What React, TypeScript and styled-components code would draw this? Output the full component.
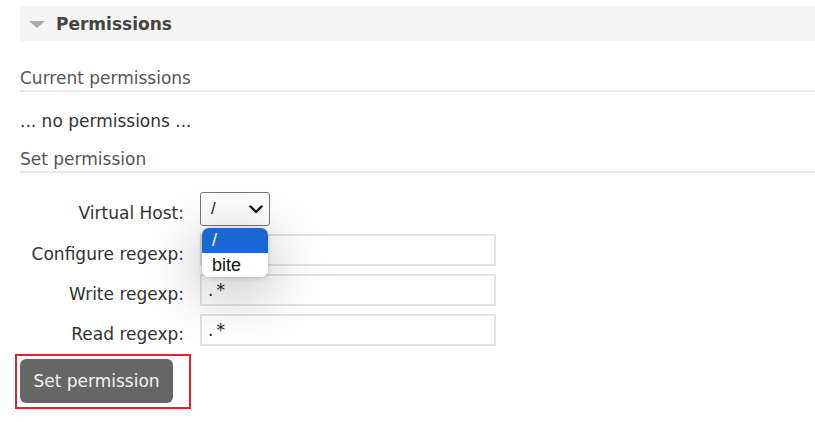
import React from "react";
import styled, { createGlobalStyle } from "styled-components";

const GlobalStyle = createGlobalStyle`
  html, body { margin: 0; padding: 0; background: #fff; }
  body {
    font-family: "DejaVu Sans", Verdana, sans-serif;
    font-size: 17px;
    color: #333;
  }
`;

const Page = styled.div`
  padding: 6px 0 0 20px;
  width: 795px;
`;

const SectionHeader = styled.div`
  display: flex;
  align-items: center;
  height: 35px;
  background: #f5f5f5;
  padding-left: 9px;
  gap: 11px;
`;

const Triangle = styled.span`
  width: 0;
  height: 0;
  border-left: 8px solid transparent;
  border-right: 8px solid transparent;
  border-top: 7px solid #aaa;
  margin-top: 1px;
`;

const HeaderTitle = styled.h2`
  margin: 0;
  font-size: 17px;
  font-weight: bold;
  color: #444;
  line-height: 20px;
`;

const SubHeading = styled.h3<{ $top: number }>`
  margin: ${(p) => p.$top}px 0 0 0;
  font-size: 17px;
  font-weight: normal;
  color: #555;
  line-height: 20px;
  padding-bottom: 2px;
  border-bottom: 2px solid #e8e8e8;
`;

const Note = styled.p`
  margin: 19px 0 0 0;
  line-height: 20px;
  color: #333;
`;

const Form = styled.div`
  display: grid;
  grid-template-columns: 180px 296px;
  row-gap: 8px;
  margin-top: 19px;
  align-items: center;
`;

const Label = styled.label`
  text-align: right;
  padding: 8px 16px 0 0;
  color: #333;
  line-height: 20px;
`;

const SelectWrap = styled.div`
  position: relative;
  width: 70px;
  height: 34px;
`;

const SelectBox = styled.div`
  box-sizing: border-box;
  width: 70px;
  height: 34px;
  border: 1px solid #767676;
  border-radius: 3px;
  display: flex;
  align-items: center;
  justify-content: space-between;
  padding: 0 5px 0 10px;
  font-family: "Liberation Sans", Arial, sans-serif;
  font-size: 17px;
  color: #222;
  background: #fff;
`;

const Popup = styled.div`
  position: absolute;
  left: 2px;
  top: 36px;
  width: 66px;
  height: 49px;
  background: #fff;
  border-radius: 7px;
  overflow: hidden;
  box-shadow: 0 12px 60px rgba(0, 0, 0, 0.34), 0 1px 4px rgba(0, 0, 0, 0.18);
  z-index: 10;
  font-family: "Liberation Sans", Arial, sans-serif;
  font-size: 18px;
`;

const Option = styled.div<{ $selected?: boolean }>`
  height: ${(p) => (p.$selected ? 25 : 24)}px;
  line-height: 24px;
  padding-left: 10px;
  background: ${(p) => (p.$selected ? "#1a68d3" : "#fff")};
  color: ${(p) => (p.$selected ? "#fff" : "#111")};
`;

const TextInput = styled.div`
  box-sizing: border-box;
  width: 296px;
  height: 32px;
  border: 2px solid #e2e2e2;
  border-radius: 1px;
  padding-left: 6px;
  display: flex;
  align-items: center;
  color: #222;
  font-size: 17px;
  letter-spacing: 3px;
`;

const Highlight = styled.div`
  display: inline-block;
  margin: 8px 0 0 -5px;
  border: 2px solid #e4212c;
  padding: 3px 16px 4px 3px;
`;

const Button = styled.button`
  display: block;
  width: 153px;
  height: 44px;
  border: none;
  border-radius: 6px;
  background: #666;
  color: #f2f2f2;
  font-family: "DejaVu Sans", Verdana, sans-serif;
  font-size: 17px;
  padding: 0;
`;

const Chevron = () => (
  <svg width="16" height="16" viewBox="0 0 16 16">
    <path d="M2.5 5.5 L8 11 L13.5 5.5" fill="none" stroke="#111" strokeWidth="2.4" strokeLinecap="round" strokeLinejoin="round" />
  </svg>
);

export default function App() {
  return (
    <>
      <GlobalStyle />
      <Page>
        <SectionHeader>
          <Triangle />
          <HeaderTitle>Permissions</HeaderTitle>
        </SectionHeader>
        <SubHeading $top={27}>Current permissions</SubHeading>
        <Note>... no permissions ...</Note>
        <SubHeading $top={18}>Set permission</SubHeading>
        <Form>
          <Label>Virtual Host:</Label>
          <SelectWrap>
            <SelectBox>
              <span>/</span>
              <Chevron />
            </SelectBox>
            <Popup>
              <Option $selected>/</Option>
              <Option>bite</Option>
            </Popup>
          </SelectWrap>
          <Label>Configure regexp:</Label>
          <TextInput />
          <Label>Write regexp:</Label>
          <TextInput>.*</TextInput>
          <Label>Read regexp:</Label>
          <TextInput>.*</TextInput>
        </Form>
        <Highlight>
          <Button>Set permission</Button>
        </Highlight>
      </Page>
    </>
  );
}
